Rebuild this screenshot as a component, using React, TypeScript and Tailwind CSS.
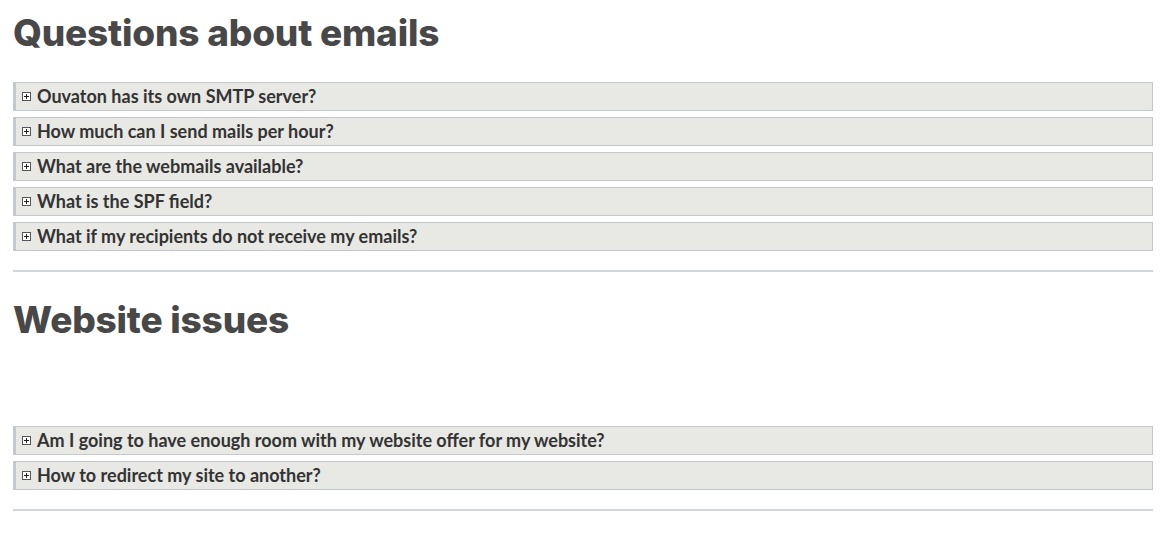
import React from "react";

const PlusBox = () => (
  <svg width="9" height="9" viewBox="0 0 9 9" className="shrink-0">
    <rect x="0.5" y="0.5" width="8" height="8" fill="#fff" stroke="#555" strokeWidth="1" />
    <path d="M2 4.5h5M4.5 2v5" stroke="#222" strokeWidth="1" />
  </svg>
);

const Item = ({ text }: { text: string }) => (
  <div className="flex h-[29px] items-center gap-[6px] border border-l-[3px] border-[#c3c8ce] bg-[#e8e8e4] pl-[6px] text-[18px] font-bold text-[#333]">
    <PlusBox />
    <span>{text}</span>
  </div>
);

const Heading = ({ children }: { children: React.ReactNode }) => (
  <h2
    className="text-[37px] font-extrabold leading-[44px] tracking-[-0.2px] text-[#484848]"
    style={{ fontFamily: "Inter, 'Open Sans', sans-serif" }}
  >
    {children}
  </h2>
);

export default function App() {
  return (
    <div
      className="min-h-[533px] bg-white pl-[13px] pr-[11px]"
      style={{ fontFamily: "Lato, 'Open Sans', sans-serif" }}
    >
      <div className="pt-[11px]">
        <Heading>Questions about emails</Heading>
      </div>
      <div className="mt-[27px] flex flex-col gap-[6px]">
        <Item text="Ouvaton has its own SMTP server?" />
        <Item text="How much can I send mails per hour?" />
        <Item text="What are the webmails available?" />
        <Item text="What is the SPF field?" />
        <Item text="What if my recipients do not receive my emails?" />
      </div>
      <div className="mt-[19px] h-[2px] bg-[#d3d6da]" />
      <div className="pt-[26px]">
        <Heading>Website issues</Heading>
      </div>
      <div className="mt-[84px] flex flex-col gap-[6px]">
        <Item text="Am I going to have enough room with my website offer for my website?" />
        <Item text="How to redirect my site to another?" />
      </div>
      <div className="mt-[19px] h-[2px] bg-[#d3d6da]" />
    </div>
  );
}
